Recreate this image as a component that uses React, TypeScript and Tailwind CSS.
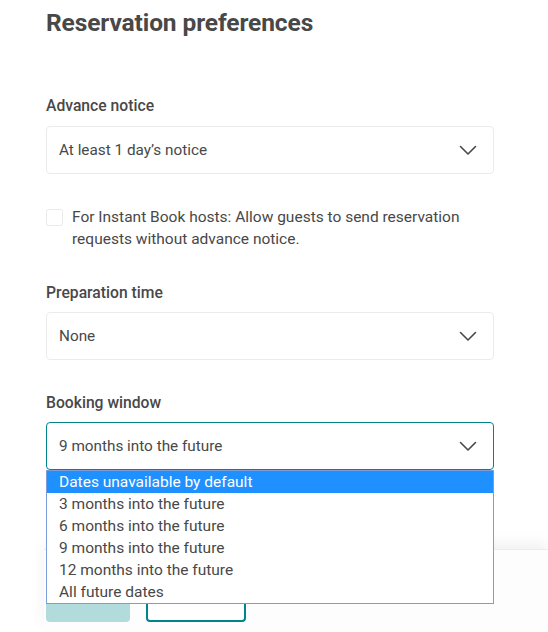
import React, { useState } from 'react'

const Chevron: React.FC = () => (
    <svg width="18" height="10" viewBox="0 0 18 10" fill="none" className="shrink-0">
        <path d="M1.5 1.5l7.5 7.5 7.5-7.5" stroke="#484848" strokeWidth="1.6" strokeLinecap="round" strokeLinejoin="round" />
    </svg>
)

const SelectBox: React.FC<{ value: string; active?: boolean }> = ({ value, active }) => (
    <div className={`h-12 flex items-center justify-between pl-3 pr-4 rounded bg-white border ${active ? 'border-[#008489]' : 'border-[#ebebeb]'}`}>
        <span className="text-[15.3px] text-[#484848]">{value}</span>
        <Chevron />
    </div>
)

const options = [
    'Dates unavailable by default',
    '3 months into the future',
    '6 months into the future',
    '9 months into the future',
    '12 months into the future',
    'All future dates',
]

const App: React.FC = () => {
    const [checked, setChecked] = useState(false)

    return (
        <div className="relative w-[548px] h-[632px] overflow-hidden bg-white text-[#484848]" style={{ fontFamily: 'Roboto, "Liberation Sans", sans-serif' }}>
            <div className="pl-[46px] pr-[54px]">
                <h1 className="pt-[8px] text-[24.5px] leading-[30px] font-bold tracking-[-0.1px]">Reservation preferences</h1>

                <div className="mt-[58px] text-[15.7px] leading-[20px] font-medium">Advance notice</div>
                <div className="mt-[10px]"><SelectBox value="At least 1 day’s notice" /></div>

                <label className="mt-[32px] flex items-start gap-[9px] cursor-pointer">
                    <input type="checkbox" checked={checked} onChange={e => setChecked(e.target.checked)} className="sr-only" />
                    <span className="mt-[3px] w-[17px] h-[17px] rounded-[2px] border border-[#ebebeb] bg-white shrink-0" />
                    <span className="text-[15.5px] leading-[22px]">For Instant Book hosts: Allow guests to send reservation requests without advance notice.</span>
                </label>

                <div className="mt-[33px] text-[15.7px] leading-[20px] font-medium">Preparation time</div>
                <div className="mt-[9px]"><SelectBox value="None" /></div>

                <div className="mt-[33px] text-[15.7px] leading-[20px] font-medium">Booking window</div>
                <div className="relative mt-[9px] z-10">
                    <SelectBox value="9 months into the future" active />
                    <ul className="absolute left-0 right-0 top-[48px] bg-white border border-[#7b9ed9]">
                        {options.map((o, i) => (
                            <li key={o} className={`h-[22px] pl-3 text-[15.5px] leading-[22px] ${i === 0 ? 'bg-[#1e90ff] text-white' : 'text-[#484848]'}`}>{o}</li>
                        ))}
                    </ul>
                </div>
            </div>

            <div className="absolute left-[44px] right-0 top-[549px] bottom-0 bg-[#fdfdfd] shadow-[0_-6px_14px_rgba(0,0,0,0.06)] border-t border-[#ececec]">
                <div className="pl-[2px] pt-[24px] flex gap-4">
                    <button className="w-[84px] h-12 rounded bg-[#b2dbdc]" />
                    <button className="w-[100px] h-12 rounded border-2 border-[#008489] bg-white" />
                </div>
            </div>
        </div>
    )
}

export default App
